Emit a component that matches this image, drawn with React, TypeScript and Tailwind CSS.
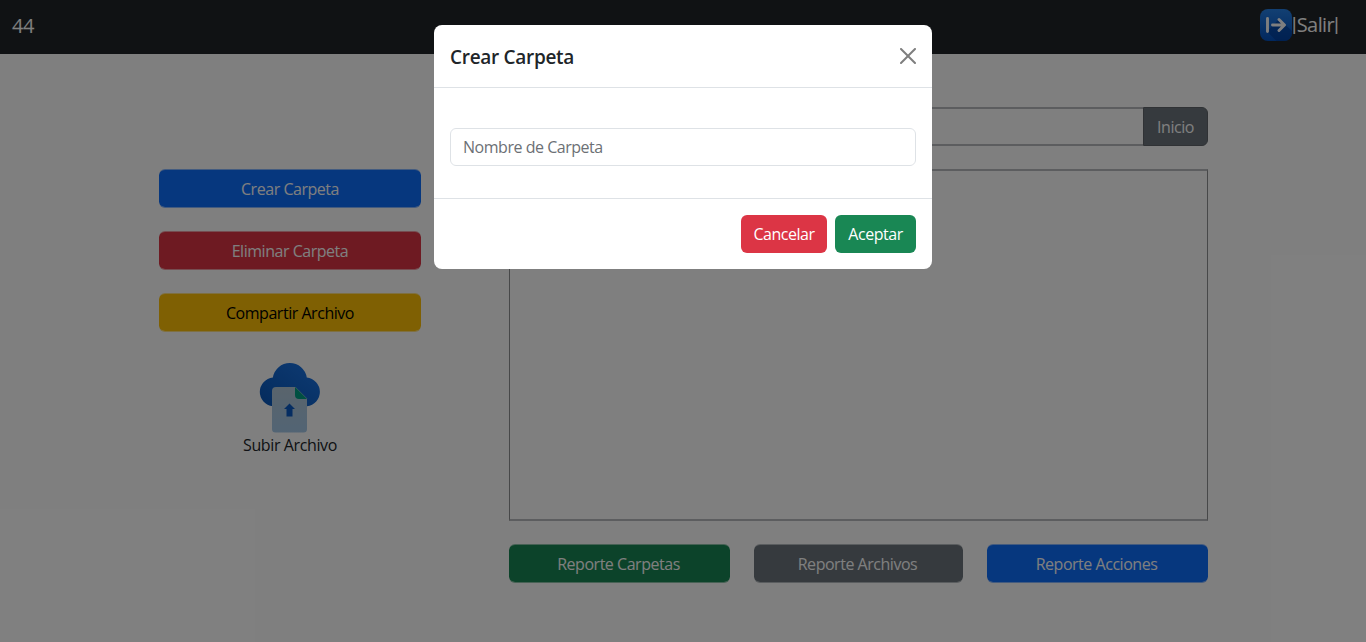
import React from "react";

const btn =
  "flex items-center justify-center whitespace-nowrap rounded-md text-base";
const pageBtn = `${btn} h-[39px] border-y bg-clip-padding`;

const blue = "border-[#0d6efd]/50 bg-[#0d6efd] text-white";
const red = "border-[#dc3545]/50 bg-[#dc3545] text-white";
const yellow = "border-[#ffc107]/50 bg-[#ffc107] text-black";
const green = "border-[#198754]/50 bg-[#198754] text-white";
const gray = "border-[#6c757d]/50 bg-[#6c757d] text-white";

function ExitIcon() {
  return (
    <svg width="32" height="32" viewBox="0 0 32 32">
      <defs>
        <linearGradient id="exit-bg" x1="0" y1="0" x2="0" y2="1">
          <stop offset="0" stopColor="#2580e6" />
          <stop offset="1" stopColor="#0350bd" />
        </linearGradient>
      </defs>
      <rect width="32" height="32" rx="8" fill="url(#exit-bg)" />
      <path d="M7 22.500 16.500 32H24A8 8 0 0 0 32 24V22L19 10Z" fill="#003a94" opacity=".6" />
      <path d="M7.500 9.500v13M12.500 16H24M19 10.500l5.500 5.500-5.500 5.500" fill="none" stroke="#fff" strokeWidth="2.9" strokeLinecap="round" strokeLinejoin="round" />
    </svg>
  );
}

function UploadIcon() {
  return (
    <svg width="62" height="70" viewBox="0 0 62 70" className="overflow-visible">
      <defs>
        <linearGradient id="cloud" x1="0" y1="1" x2="1" y2="0">
          <stop offset="0" stopColor="#0856b8" />
          <stop offset="1" stopColor="#1c76e8" />
        </linearGradient>
        <linearGradient id="sheet" x1="0" y1="0" x2="0" y2="1">
          <stop offset="0" stopColor="#b3c8d9" />
          <stop offset="1" stopColor="#a5c8e8" />
        </linearGradient>
      </defs>
      <path d="M14.500 43A14 14 0 0 1 14.700 15.200A16.200 16.200 0 0 1 46.800 15.200A14 14 0 0 1 47 43Z" fill="url(#cloud)" transform="translate(-1.600 -1.200) scale(1.055 1.035)" />
      <path d="M17 24H36.500L48 35.500V66Q48 69.500 44.500 69.500H16.500Q13 69.500 13 66V28Q13 24 17 24Z" fill="url(#sheet)" />
      <path d="M36 24 48 36H40Q36 36 36 32Z" fill="#00a184" />
      <path d="M30.500 40.500 36 46H33.500V53.500H27.500V46H25Z" fill="#0b5bc4" />
    </svg>
  );
}

function Page() {
  return (
    <div className="flex h-full flex-col">
      <header className="flex h-[54px] items-center justify-between bg-[#212529] pr-[27px] pl-3 text-xl text-white">
        <span className="pb-[2px] tracking-[-0.5px]">44</span>
        <a className="flex items-center pb-1">
          <ExitIcon />
          <span className="font-['Roboto',sans-serif] tracking-normal">|</span>
          <span className="tracking-[-0.6px]">Salir</span>
          <span className="font-['Roboto',sans-serif] tracking-normal">|</span>
        </a>
      </header>
      <main className="flex">
        <aside className="ml-[159px] flex w-[262px] flex-col gap-[23px] pt-[115px]">
          <button className={`${pageBtn} ${blue}`}>Crear Carpeta</button>
          <button className={`${pageBtn} ${red}`}>Eliminar Carpeta</button>
          <button className={`${pageBtn} ${yellow}`}>Compartir Archivo</button>
          <div className="flex flex-col items-center pt-2 text-[#212529]">
            <UploadIcon />
            <span className="leading-6 tracking-[-0.38px]">Subir Archivo</span>
          </div>
        </aside>
        <section className="ml-[88px] flex w-[699px] flex-col pt-[53px]">
          <div className="flex h-[39px]">
            <div className="flex-1 rounded-l-md border-2 border-r-0 border-[#b8bbbe]" />
            <button className="flex w-[65px] items-center justify-center rounded-r-md border border-[#60656a] bg-[#6c757d] text-base text-white">
              Inicio
            </button>
          </div>
          <div className="mt-[23px] h-[352px] border-x border-y-2 border-x-[#8e9092] border-y-[#b8bbbe]" />
          <div className="mt-[23px] flex gap-6">
            <button className={`${pageBtn} ${green} w-[221px] pr-[2px]`}>Reporte Carpetas</button>
            <button className={`${pageBtn} ${gray} w-[209px] pr-[2px]`}>Reporte Archivos</button>
            <button className={`${pageBtn} ${blue} w-[221px] pr-[2px]`}>Reporte Acciones</button>
          </div>
        </section>
      </main>
    </div>
  );
}

function CreateFolderDialog() {
  return (
    <div className="absolute inset-0 flex items-start justify-center bg-black/50 pt-[25px]">
      <div role="dialog" className="flex h-[244px] w-[498px] flex-col overflow-hidden rounded-lg bg-white">
        <div className="flex h-[63px] items-center justify-between border-b border-[#dee2e6] px-4">
          <h5 className="pt-[2px] text-[19px] font-semibold tracking-[-0.3px] text-[#212529]">Crear Carpeta</h5>
          <svg width="16" height="16" viewBox="0 0 16 16" fill="#000" opacity=".5">
            <path d="M.293.293a1 1 0 0 1 1.414 0L8 6.586 14.293.293a1 1 0 1 1 1.414 1.414L9.414 8l6.293 6.293a1 1 0 0 1-1.414 1.414L8 9.414l-6.293 6.293a1 1 0 0 1-1.414-1.414L6.586 8 .293 1.707a1 1 0 0 1 0-1.414z" />
          </svg>
        </div>
        <div className="flex flex-1 items-start px-4 pt-10">
          <input
            placeholder="Nombre de Carpeta"
            className="h-[38px] w-full rounded-md border border-[#dee2e6] px-3 text-base placeholder:text-[#6c7075]"
          />
        </div>
        <div className="flex h-[71px] items-center justify-end gap-2 border-t border-[#dee2e6] px-4">
          <button className={`${btn} h-[38px] w-[86px] bg-[#dc3545] text-white`}>Cancelar</button>
          <button className={`${btn} h-[38px] w-[81px] bg-[#198754] text-white`}>Aceptar</button>
        </div>
      </div>
    </div>
  );
}

export default function App() {
  return (
    <div className="relative h-[642px] w-full overflow-hidden bg-white font-['Segoe_UI','Open_Sans','Noto_Sans',sans-serif] text-base tracking-[-0.47px]">
      <Page />
      <CreateFolderDialog />
    </div>
  );
}
